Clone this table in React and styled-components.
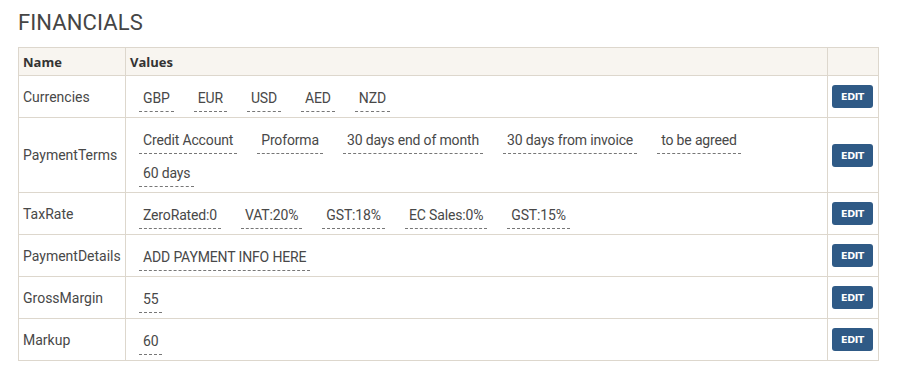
import styled, { createGlobalStyle } from 'styled-components';

const GlobalStyle = createGlobalStyle`
  body {
    margin: 0;
    background: #fff;
    font-family: Roboto, 'Liberation Sans', sans-serif;
    color: #484848;
  }
`;

const Page = styled.div`
  padding: 10px 32px 10px 18px;
`;

const Title = styled.h2`
  margin: 0 0 11px;
  font-size: 22px;
  line-height: 26px;
  font-weight: 400;
  color: #454545;
  letter-spacing: 0.1px;
`;

const Table = styled.table`
  width: 861px;
  border-collapse: collapse;
  table-layout: fixed;
  font-size: 14px;
`;

const HeadCell = styled.th`
  height: 27px;
  padding: 0 4px;
  text-align: left;
  background: #f8f5f0;
  border: 1px solid #ddd7cd;
  font-family: 'Open Sans', sans-serif;
  font-size: 13px;
  font-weight: 700;
  color: #333;
  width: ${(p) => p.$w || 'auto'};
`;

const NameCell = styled.td`
  padding: 0 4px;
  border: 1px solid #ddd7cd;
  vertical-align: middle;
  color: #484848;
`;

const ValuesCell = styled.td`
  padding: 7px 40px 5px 13px;
  border: 1px solid #ddd7cd;
  vertical-align: middle;
`;

const TagList = styled.div`
  display: flex;
  flex-wrap: wrap;
  column-gap: 20px;
  row-gap: 4px;
`;

const Tag = styled.span`
  display: inline-block;
  padding: 5px 4px 3px;
  line-height: 20px;
  letter-spacing: -0.15px;
  border-bottom: 1px dashed #777;
  color: #484848;
  white-space: nowrap;
`;

const ActionCell = styled.td`
  padding: 0 6px 0 4px;
  border: 1px solid #ddd7cd;
  vertical-align: middle;
`;

const EditButton = styled.button`
  display: block;
  width: 41px;
  height: 23px;
  margin: 0;
  padding: 0;
  border: none;
  border-radius: 3px;
  background: #2f5a86;
  color: #fff;
  font-family: 'DejaVu Sans', Verdana, sans-serif;
  font-size: 9.5px;
  font-weight: 700;
  letter-spacing: -0.4px;
  cursor: pointer;
`;

const rows = [
  { name: 'Currencies', values: ['GBP', 'EUR', 'USD', 'AED', 'NZD'] },
  {
    name: 'PaymentTerms',
    values: ['Credit Account', 'Proforma', '30 days end of month', '30 days from invoice', 'to be agreed', '60 days'],
  },
  { name: 'TaxRate', values: ['ZeroRated:0', 'VAT:20%', 'GST:18%', 'EC Sales:0%', 'GST:15%'] },
  { name: 'PaymentDetails', values: ['ADD PAYMENT INFO HERE'] },
  { name: 'GrossMargin', values: ['55'] },
  { name: 'Markup', values: ['60'] },
];

const App = () => {
  return (
    <>
      <GlobalStyle />
      <Page>
        <Title>FINANCIALS</Title>
        <Table>
          <thead>
            <tr>
              <HeadCell $w="98px">Name</HeadCell>
              <HeadCell>Values</HeadCell>
              <HeadCell $w="42px"></HeadCell>
            </tr>
          </thead>
          <tbody>
            {rows.map((row) => (
              <tr key={row.name}>
                <NameCell>{row.name}</NameCell>
                <ValuesCell>
                  <TagList>
                    {row.values.map((v) => (
                      <Tag key={v}>{v}</Tag>
                    ))}
                  </TagList>
                </ValuesCell>
                <ActionCell>
                  <EditButton>EDIT</EditButton>
                </ActionCell>
              </tr>
            ))}
          </tbody>
        </Table>
      </Page>
    </>
  );
};

export default App;
